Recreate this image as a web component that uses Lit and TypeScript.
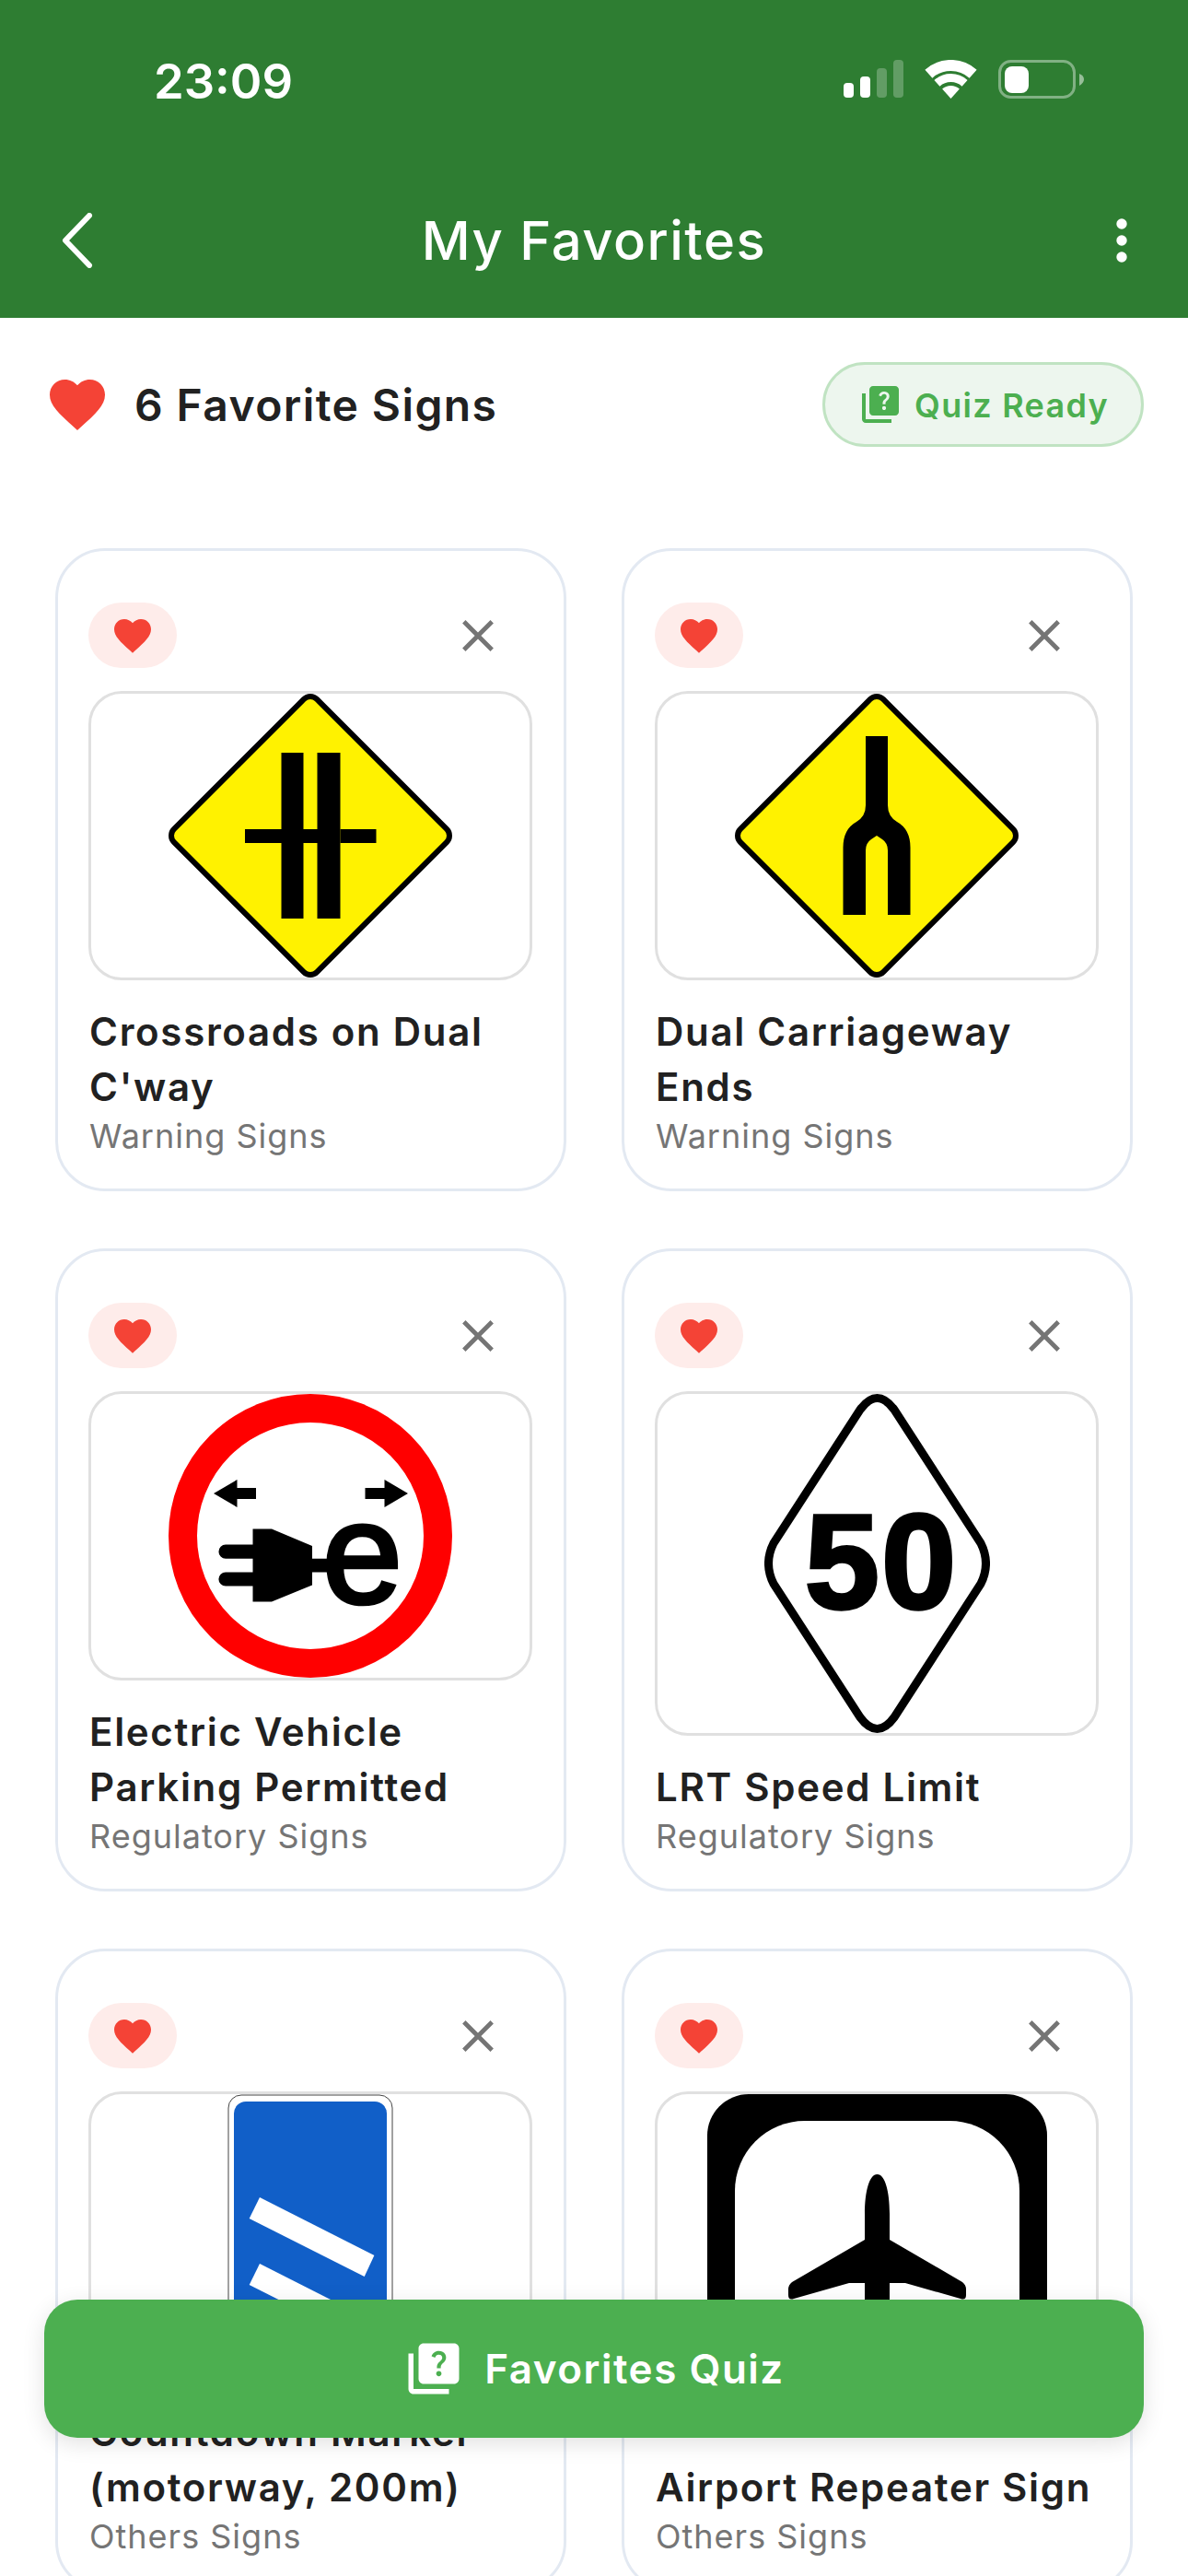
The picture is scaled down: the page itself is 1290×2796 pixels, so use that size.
import { LitElement, css, html, svg } from "lit";
import { customElement } from "lit/decorators.js";

const HEART = "M12 21.35l-1.45-1.32C5.4 15.36 2 12.28 2 8.5 2 5.42 4.42 3 7.5 3c1.74 0 3.41.81 4.5 2.09C13.09 3.81 14.76 3 16.5 3 19.58 3 22 5.42 22 8.5c0 3.78-3.4 6.86-8.55 11.54L12 21.35z";
const CLOSE = "M19 6.41L17.59 5 12 10.59 6.41 5 5 6.41 10.59 12 5 17.59 6.41 19 12 13.41 17.59 19 19 17.59 13.41 12z";
const QUIZ = "M4 6H2v14c0 1.1.9 2 2 2h14v-2H4V6zM20 2H8c-1.1 0-2 .9-2 2v12c0 1.1.9 2 2 2h12c1.1 0 2-.9 2-2V4c0-1.1-.9-2-2-2zm-5.99 13c-.59 0-1.05-.47-1.05-1.05 0-.59.47-1.04 1.05-1.04.59 0 1.04.45 1.04 1.04-.01.58-.45 1.05-1.04 1.05zm2.5-6.17c-.63.93-1.23 1.21-1.56 1.81-.13.24-.18.4-.18 1.18h-1.52c0-.41-.06-1.08.26-1.65.41-.73 1.18-1.16 1.63-1.8.48-.68.21-1.94-1.14-1.94-.88 0-1.32.67-1.5 1.23l-1.37-.57C11.51 5.96 12.52 5 13.99 5c1.23 0 2.08.56 2.51 1.26.37.61.58 1.73.01 2.57z";

const yellowDiamond = (inner: unknown) => html`
  <svg width="308" height="308" viewBox="0 0 308 308">
    <rect x="-109.700" y="-109.700" width="219.400" height="219.400" rx="10" transform="translate(154 154) rotate(45)"
      fill="#fff200" stroke="#000" stroke-width="6"></rect>
    ${inner}
  </svg>`;

const signs = {
  crossroads: () => yellowDiamond(svg`
    <path d="M122.500 64h24v83h15V64h25v180h-25V162h-15v82h-24V162H83v-15h39.500z"></path>
    <path d="M186.500 147h39v15h-39z"></path>`),
  carriageway: () => yellowDiamond(svg`
    <path d="M142 46H166V121Q166 133 176 139Q190.500 147 190.500 167V240H166V170Q166 162 160 158L154 154L148 158Q142 162 142 170V240H117.500V167Q117.500 147 132 139Q142 133 142 121Z"></path>`),
  electric: () => html`
    <svg width="308" height="308" viewBox="0 0 308 308">
      <circle cx="154" cy="154" r="138.500" fill="#fff" stroke="#f00" stroke-width="31"></circle>
      <path d="M49 108L74.500 93V102H95V114H74.500V123Z"></path>
      <path d="M260 108L234.500 93V102H213.500V114H234.500V123Z"></path>
      <path d="M91.500 146.500H112L156 165V178.700H173V193.400H156V207.600L112 225.500H91.500V208.600H62A7.500 7.500 0 0 1 62 193.400H91.500V178.700H62A7.500 7.500 0 0 1 62 163.600H91.500Z"></path>
      <text class="sign-e" x="167" y="226">e</text>
    </svg>`,
  speed: () => html`
    <svg width="245" height="368" viewBox="0 0 245 368">
      <path d="M104 17Q122.500 -8 141 17L235 162Q246 184 235 206L141 351Q122.500 376 104 351L10 206Q-1 184 10 162Z"
        fill="#fff" stroke="#000" stroke-width="9" stroke-linejoin="round"></path>
      <text class="sign-num" x="127" y="233" text-anchor="middle">50</text>
    </svg>`,
  countdown: () => html`
    <svg width="180" height="308" viewBox="0 0 180 308">
      <rect x="1" y="1" width="178" height="306" rx="14" fill="#fff" stroke="#444" stroke-width="1"></rect>
      <rect x="7" y="8" width="166" height="292" rx="13" fill="#115fc8"></rect>
      <path d="M35 112L159.400 175L148.700 198L23.700 135Z" fill="#fff"></path>
      <path d="M35 184L159.400 247L148.700 270L23.700 207Z" fill="#fff"></path>
    </svg>`,
  airport: () => html`
    <svg width="369" height="368" viewBox="0 0 369 368">
      <rect width="369" height="368" rx="45"></rect>
      <rect x="30" y="29" width="309" height="310" rx="76" fill="#fff"></rect>
      <path d="M184.500 87C193 87 198 105 198 130V158L277 204Q281 207 281 212V218Q281 224 275 222L215 205H198V270L225 295V305H144V295L171 270V205H154L94 222Q88 224 88 218V212Q88 207 92 204L171 158V130C171 105 176 87 184.500 87Z"></path>
    </svg>`,
};

const ITEMS = [
  { title: "Crossroads on Dual C'way", group: "Warning Signs", sign: signs.crossroads },
  { title: "Dual Carriageway Ends", group: "Warning Signs", sign: signs.carriageway },
  { title: "Electric Vehicle Parking Permitted", group: "Regulatory Signs", sign: signs.electric },
  { title: "LRT Speed Limit", group: "Regulatory Signs", sign: signs.speed },
  { title: "Countdown Marker (motorway, 200m)", group: "Others Signs", sign: signs.countdown },
  { title: "Airport Repeater Sign", group: "Others Signs", sign: signs.airport },
];

@customElement("app-root")
export class AppRoot extends LitElement {
  static styles = css`
    :host {
      display: block;
      position: relative;
      width: 1290px;
      height: 2796px;
      overflow: hidden;
      background: #fff;
      font-family: Inter, "Liberation Sans", sans-serif;
      color: #212121;
    }
    svg { display: block; flex: none; }
    .header { height: 345px; background: #2e7d32; color: #fff; }
    .status {
      height: 177px;
      box-sizing: border-box;
      padding: 55px 113px 0 167px;
      display: flex;
      justify-content: space-between;
    }
    .time { font-size: 52.5px; line-height: 66px; font-weight: 600; }
    .status-icons { display: flex; gap: 23px; margin-top: 10px; }
    .appbar {
      height: 168px;
      display: grid;
      grid-template-columns: 1fr auto 1fr;
      align-items: center;
    }
    .back { padding-left: 64px; }
    .appbar h1 { margin: 0; font-size: 58px; font-weight: 500; letter-spacing: 1.5px; }
    .more { justify-self: end; padding-right: 66px; }
    .summary {
      display: flex;
      justify-content: space-between;
      align-items: center;
      padding: 48px 48px 110px;
    }
    .count { display: flex; align-items: center; gap: 26px; font-size: 48px; line-height: 60px; font-weight: 600; letter-spacing: 1.4px; }
    .count span { padding-top: 2px; }
    .ready {
      display: flex;
      align-items: center;
      gap: 13px;
      box-sizing: border-box;
      width: 349px;
      height: 92px;
      padding-left: 36px;
      border: 3px solid #c0e3c2;
      border-radius: 46px;
      background: #edf6ee;
      color: #4caf50;
      font-size: 36px;
      font-weight: 600;
      letter-spacing: 1.3px;
    }
    .ready span { padding-top: 2px; }
    .grid {
      display: grid;
      grid-template-columns: 555px 555px;
      grid-auto-rows: 698px;
      gap: 62px 60px;
      padding-left: 60px;
    }
    .card {
      display: flex;
      flex-direction: column;
      box-sizing: border-box;
      padding: 56px 34px 35px 33px;
      border: 3px solid #e3e9f2;
      border-radius: 54px;
      background: #fff;
    }
    .card-top { display: flex; justify-content: space-between; height: 71px; margin-bottom: 25px; }
    .fav {
      display: flex;
      align-items: center;
      justify-content: center;
      width: 96px;
      border-radius: 36px;
      background: #feecea;
    }
    .remove { display: flex; align-items: center; justify-content: center; width: 118px; }
    .frame {
      flex: 1;
      min-height: 0;
      display: flex;
      align-items: center;
      justify-content: center;
      border: 3px solid #e0e0e0;
      border-radius: 36px;
    }
    .sign-e { font-family: "Liberation Sans", sans-serif; font-size: 156px; stroke: #000; stroke-width: 4.5px; }
    .sign-num { font-family: "Liberation Sans", sans-serif; font-size: 146px; font-weight: 700; letter-spacing: 2px; stroke: #000; stroke-width: 3.5px; }
    .title { margin-top: 26px; padding-left: 1px; font-size: 42px; line-height: 60px; font-weight: 600; letter-spacing: 1.7px; }
    .group { margin-top: 1px; padding-left: 1px; font-size: 36px; line-height: 44px; color: #757575; letter-spacing: 1px; }
    .quiz-btn {
      position: absolute;
      left: 48px;
      right: 48px;
      bottom: 150px;
      height: 150px;
      display: flex;
      align-items: center;
      justify-content: center;
      gap: 22px;
      border-radius: 36px;
      background: #4caf50;
      color: #fff;
      font-size: 44px;
      font-weight: 600;
      letter-spacing: 1.5px;
      box-shadow: 0 6px 24px rgba(0, 0, 0, 0.12);
    }
  `;

  private renderStatusIcons() {
    return html`
      <div class="status-icons">
        <svg width="65" height="42" viewBox="0 0 65 42" fill="#fff">
          <rect y="25" width="11" height="16" rx="4"></rect>
          <rect x="18" y="18" width="11" height="23" rx="4"></rect>
          <rect x="36" y="9" width="11" height="32" rx="4" opacity="0.25"></rect>
          <rect x="54" y="0" width="11" height="41" rx="4" opacity="0.25"></rect>
        </svg>
        <svg width="57" height="42" viewBox="0 0 57 42" fill="none" stroke="#fff">
          <path d="M4.400 15.200A36 36 0 0 1 52.600 15.200" stroke-width="12"></path>
          <path d="M13.450 25.300A22.500 22.500 0 0 1 43.550 25.300" stroke-width="9"></path>
          <path d="M28.500 42L19.100 31.600A14 14 0 0 1 37.900 31.600Z" fill="#fff" stroke="none"></path>
        </svg>
        <svg width="93" height="42" viewBox="0 0 93 42" fill="#fff">
          <rect x="1.500" y="1.500" width="81" height="39" rx="12" fill="none" stroke="#fff" stroke-width="3" opacity="0.4"></rect>
          <rect x="7" y="7" width="26" height="29" rx="8"></rect>
          <path d="M88 15Q93 17 93 21Q93 25 88 28Z" opacity="0.5"></path>
        </svg>
      </div>`;
  }

  render() {
    return html`
      <header class="header">
        <div class="status">
          <span class="time">23:09</span>
          ${this.renderStatusIcons()}
        </div>
        <div class="appbar">
          <div class="back">
            <svg width="40" height="60" viewBox="0 0 40 60" fill="none" stroke="#fff" stroke-width="6" stroke-linecap="round" stroke-linejoin="round">
              <path d="M33 3L7 30L33 57"></path>
            </svg>
          </div>
          <h1>My Favorites</h1>
          <div class="more">
            <svg width="12" height="48" viewBox="0 0 12 48" fill="#fff">
              <circle cx="6" cy="6" r="5.700"></circle>
              <circle cx="6" cy="24" r="5.700"></circle>
              <circle cx="6" cy="42" r="5.700"></circle>
            </svg>
          </div>
        </div>
      </header>
      <div class="summary">
        <div class="count">
          <svg width="72" height="72" viewBox="0 0 24 24" fill="#f44336"><path d="${HEART}"></path></svg>
          <span>6 Favorite Signs</span>
        </div>
        <div class="ready">
          <svg width="48" height="48" viewBox="0 0 24 24" fill="#4caf50" fill-rule="evenodd"><path d="${QUIZ}"></path></svg>
          <span>Quiz Ready</span>
        </div>
      </div>
      <div class="grid">
        ${ITEMS.map((item) => html`
          <article class="card">
            <div class="card-top">
              <div class="fav">
                <svg width="48" height="48" viewBox="0 0 24 24" fill="#f44336"><path d="${HEART}"></path></svg>
              </div>
              <div class="remove">
                <svg width="58" height="58" viewBox="0 0 24 24" fill="#757575"><path d="${CLOSE}"></path></svg>
              </div>
            </div>
            <div class="frame">${item.sign()}</div>
            <div class="title">${item.title}</div>
            <div class="group">${item.group}</div>
          </article>
        `)}
      </div>
      <div class="quiz-btn">
        <svg width="66" height="66" viewBox="0 0 24 24" fill="#fff" fill-rule="evenodd"><path d="${QUIZ}"></path></svg>
        <span>Favorites Quiz</span>
      </div>
    `;
  }
}
